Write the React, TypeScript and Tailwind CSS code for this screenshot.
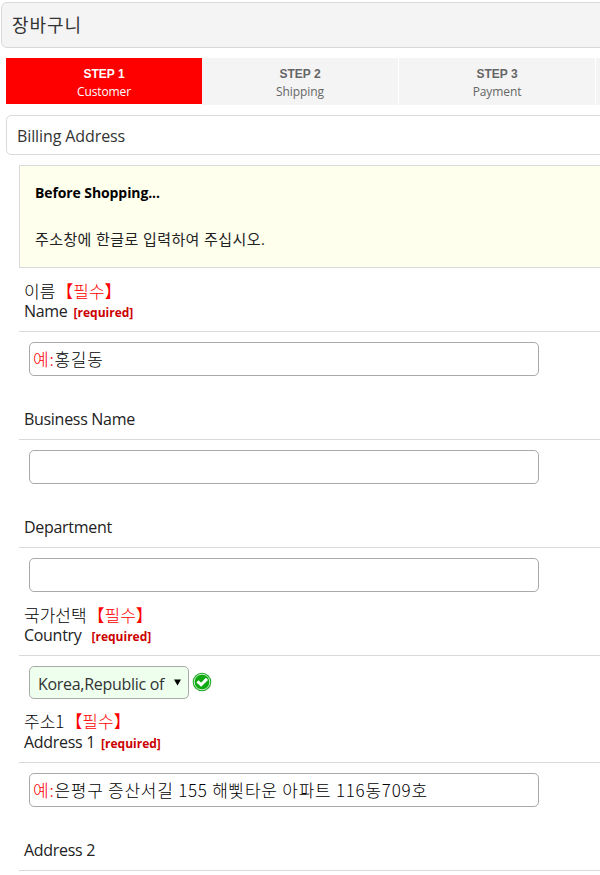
import type { ReactNode } from "react";

const Step = (props: any) => {
    return (
        <div className={"flex flex-col items-center w-[196px] shrink-0 pt-[7px] text-[12px] leading-[18px] " + (props.active ? "h-[46px] bg-[#ff0000] text-white" : "h-[47px] bg-[#f4f4f4] text-[#666666] mr-px")}>
            <b className="font-['Liberation_Sans',sans-serif]">{props.title}</b>
            <span className="tracking-[-0.1px]">{props.name}</span>
        </div>
    )
}

const Label = (props: any) => {
    return (
        <div className="flex flex-col justify-end h-16 pl-[5px] pb-[10px] border-b border-[#d9d9d9]">
            {props.korean && (
                <p className={"font-['Noto_Sans_CJK_KR',sans-serif] font-light text-[17px] leading-5 text-black whitespace-nowrap " + (props.koreanClass || "")}>
                    {props.korean}
                    <span className="text-[#ff0000] ml-px">【필수】</span>
                </p>
            )}
            <p className="flex items-center leading-5 tracking-[-0.3px] text-[#222222] whitespace-nowrap">
                <span>{props.label}</span>
                {props.korean && (
                    <b className={"text-[12px] tracking-normal text-[#cc0000] pt-[3px] leading-[17px] " + (props.gap || "ml-[6px]")}>[required]</b>
                )}
            </p>
        </div>
    )
}

const Input = (props: { children?: ReactNode }) => {
    return (
        <div className="pt-[10px] pl-[10px]">
            <div className="flex items-center w-[510px] h-[34px] pl-[3px] border border-[#a9a9a9] rounded-[5px] bg-white font-['Noto_Sans_CJK_KR',sans-serif] font-light text-[17px] tracking-[0.75px] text-black whitespace-pre">
                {props.children}
            </div>
        </div>
    )
}

const Billing = () => {
    return (
        <div className="w-[600px] h-[875px] overflow-hidden bg-white pt-[2px] font-['Open_Sans','Noto_Sans_CJK_KR',sans-serif] text-[16px]">
            <div className="flex items-center h-[46px] w-[610px] ml-px pl-[10px] border border-[#d9d9d9] rounded-[6px] bg-[#f4f4f4] text-[18px] text-[#333333]">
                <h1 className="tracking-[0.9px] pt-px">장바구니</h1>
            </div>
            <div className="flex h-[47px] mt-[10px] ml-[6px]">
                <Step active title="STEP 1" name="Customer" />
                <Step title="STEP 2" name="Shipping" />
                <Step title="STEP 3" name="Payment" />
                <Step />
            </div>
            <div className="flex items-center h-10 w-[610px] mt-[10px] ml-[6px] pl-[10px] border border-[#d9d9d9] rounded-[5px] text-[#333333]">
                <h2 className="tracking-[-0.1px] pt-[2px]">Billing Address</h2>
            </div>
            <div className="ml-[19px] mt-[10px]">
                <div className="h-[103px] pl-[15px] pt-[17px] border border-r-0 border-[#d9d9d9] bg-[#ffffee]">
                    <h3 className="font-bold text-[14px] leading-5 text-black tracking-[-0.1px]">Before Shopping...</h3>
                    <p className="mt-[26px] text-[15px] leading-5 text-[#222222] tracking-[0.4px]">주소창에 한글로 입력하여 주십시오.</p>
                </div>
                <Label korean="이름" label="Name" />
                <Input>
                    <span className="text-[#ff0000]">예:</span>홍길동
                </Input>
                <Label label="Business Name" />
                <Input />
                <Label label="Department" />
                <Input />
                <Label korean="국가선택" label="Country" gap="ml-[10px]" />
                <div className="flex items-center h-[43px] pt-[10px] pl-[10px]">
                    <div className="flex items-center w-40 h-[33px] pl-2 border border-[#a9a9a9] rounded-[5px] bg-[#eeffee] text-[#333333]">
                        <span className="w-[126px] pt-[2px] tracking-[-0.3px] whitespace-nowrap">Korea,Republic of</span>
                        <svg className="ml-[10px] mb-px" width="7" height="7" viewBox="0 0 7 7">
                            <path d="M0 0.5H7L3.5 6.5Z" fill="#000" />
                        </svg>
                    </div>
                    <svg className="ml-[3px] mb-[2px]" width="20" height="20" viewBox="0 0 20 20">
                        <circle cx="10" cy="10" r="9.3" fill="#22a828" />
                        <circle cx="10" cy="10" r="7.8" fill="#0faa12" stroke="#c5f0c5" strokeWidth="1" />
                        <path d="M5.4 9.3L9.1 12.7L15 6.9" fill="none" stroke="#fff" strokeWidth="3" />
                    </svg>
                </div>
                <Label korean="주소1" label="Address 1" koreanClass="pb-px" />
                <Input>
                    <span className="text-[#ff0000]">예:</span>은평구 증산서길 155 해삧타운 아파트 116동709호
                </Input>
                <Label label="Address 2" />
            </div>
        </div>
    )
}

export default Billing;
